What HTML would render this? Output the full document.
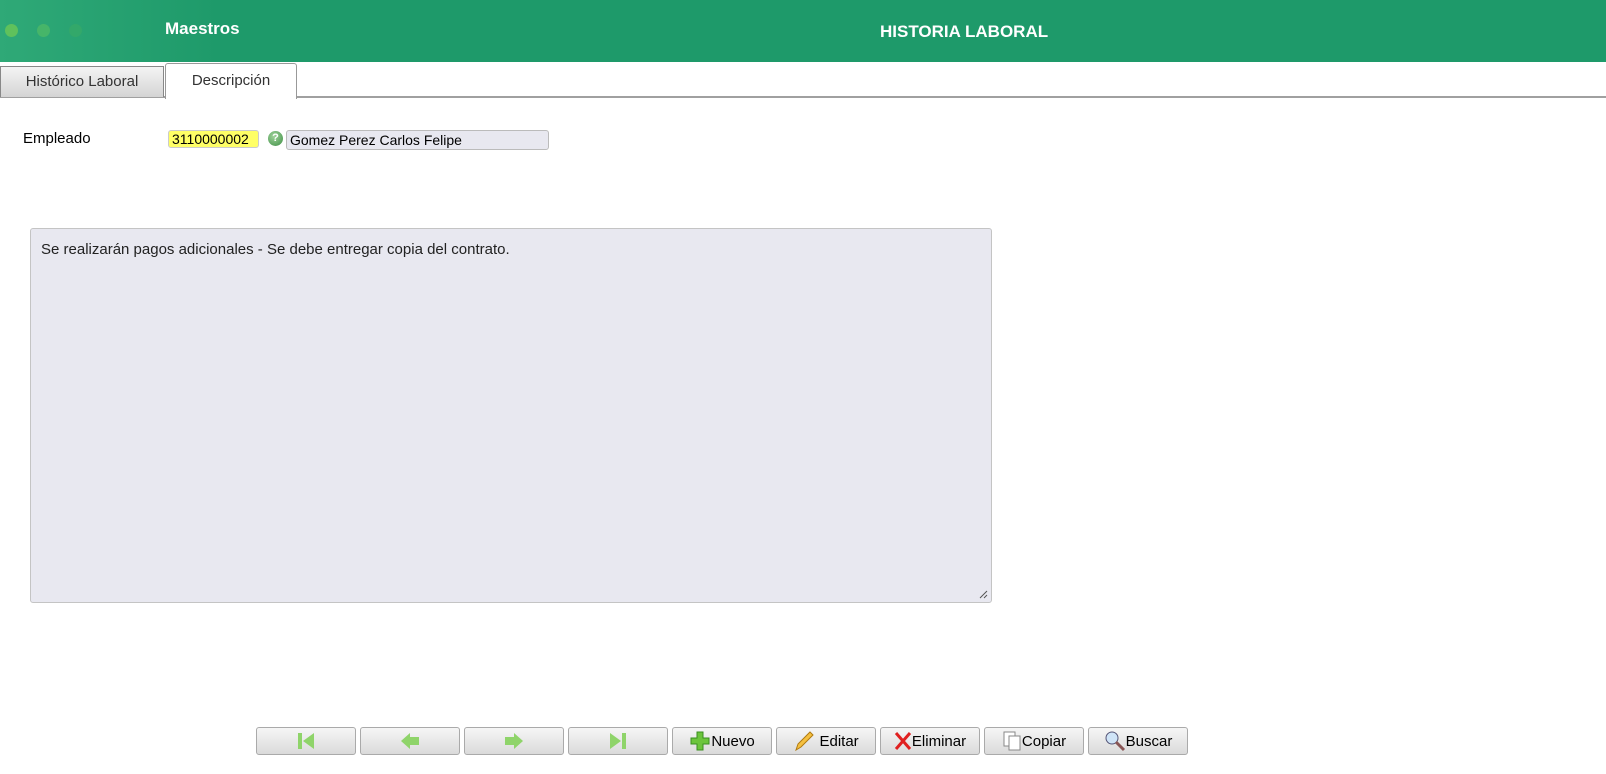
<!DOCTYPE html>
<html><head><meta charset="utf-8"><style>
body{margin:0;width:1606px;height:774px;overflow:hidden;background:#fff;font-family:"Liberation Sans",sans-serif;position:relative}
.hdr{position:absolute;left:0;top:0;width:1606px;height:62px;background:linear-gradient(90deg,#2fa977 0,#1e9a6a 220px,#1e9a6a 100%)}
.dot{position:absolute;top:24px;width:13px;height:13px;border-radius:50%}
.hdr .t1{position:absolute;left:165px;top:19px;color:#fff;font-weight:bold;font-size:17px}
.hdr .t2{position:absolute;left:880px;top:22px;color:#fff;font-weight:bold;font-size:17px}
.tabline{position:absolute;left:0;top:96px;width:1606px;height:2px;background:#a0a0a0}
.tab1{position:absolute;left:0;top:66px;width:162px;height:30px;background:linear-gradient(#f4f4f4,#d4d4d4);border:1px solid #888;border-bottom:none;font-size:15px;color:#333;text-align:center;line-height:29px}
.tab2{position:absolute;left:165px;top:63px;width:130px;height:35px;background:#fff;border:1px solid #999;border-bottom:none;border-radius:3px 3px 0 0;font-size:15px;color:#333;text-align:center;line-height:34px}
.lbl{position:absolute;left:23px;top:130px;font-size:15px;color:#000}
.code{position:absolute;left:168px;top:130px;height:18px;background:#ffff66;border:1px solid #ccc;border-radius:3px;font-size:14px;line-height:17px;padding-left:3px;box-sizing:border-box;width:91px}
.q{position:absolute;left:268px;top:131px;width:15px;height:15px;border-radius:50%;background:radial-gradient(circle at 40% 35%,#9fd39a,#3e8e45);color:#fff;font:bold 11px "Liberation Sans";text-align:center;line-height:15px}
.name{position:absolute;left:286px;top:130px;width:263px;height:20px;background:#e8e8f0;border:1px solid #bbb;border-radius:3px;box-sizing:border-box;font-size:14px;line-height:18px;padding-left:3px}
.ta{position:absolute;left:30px;top:228px;width:962px;height:375px;box-sizing:border-box;background:#e8e8f0;border:1px solid #c4c4c4;border-radius:3px;font-size:15px;padding:12px 10px;color:#222}
.btn{position:absolute;top:727px;width:100px;height:28px;box-sizing:border-box;border:1px solid #aaa;border-radius:3px;background:linear-gradient(#f6f6f6,#dadada);font-size:15px;color:#000;display:flex;align-items:center;justify-content:center;font-family:"Liberation Sans Narrow","Liberation Sans",sans-serif}
</style></head><body>
<div class="hdr">
<div class="dot" style="left:5px;background:#5fc15c"></div>
<div class="dot" style="left:37px;background:#4db966;opacity:.8"></div>
<div class="dot" style="left:69px;background:#33a86a"></div>
<div class="t1">Maestros</div><div class="t2">HISTORIA LABORAL</div></div>
<div class="tabline"></div>
<div class="tab1">Histórico Laboral</div>
<div class="tab2">Descripción</div>
<div class="lbl">Empleado</div>
<div class="code">3110000002</div>
<div class="q">?</div>
<div class="name">Gomez Perez Carlos Felipe</div>
<div class="ta">Se realizarán pagos adicionales - Se debe entregar copia del contrato.
<svg style="position:absolute;right:3px;bottom:3px" width="9" height="9"><path d="M1 8L8 1M5 8L8 5" stroke="#555"/></svg></div>
<div class="btn" style="left:256px"><svg width="20" height="20"><rect x="2" y="2" width="4" height="16" fill="#8fd46a"/><path d="M18 2L7 10L18 18Z" fill="#8fd46a"/></svg></div>
<div class="btn" style="left:360px"><svg width="22" height="20"><path d="M2 10L11 2V6H20V14H11V18Z" fill="#8fd46a"/></svg></div>
<div class="btn" style="left:464px"><svg width="22" height="20"><path d="M20 10L11 2V6H2V14H11V18Z" fill="#8fd46a"/></svg></div>
<div class="btn" style="left:568px"><svg width="20" height="20"><rect x="14" y="2" width="4" height="16" fill="#8fd46a"/><path d="M2 2L13 10L2 18Z" fill="#8fd46a"/></svg></div>
<div class="btn" style="left:672px"><svg width="22" height="22"><path d="M8 2H14V8H20V14H14V20H8V14H2V8H8Z" fill="#6cc53c" stroke="#3a8f20"/></svg>Nuevo</div>
<div class="btn" style="left:776px"><svg width="22" height="22"><path d="M3 20L5 14L17 2L20 5L8 17Z" fill="#f5c040" stroke="#b07a10"/></svg>&nbsp;Editar</div>
<div class="btn" style="left:880px"><svg width="18" height="20"><path d="M2 2L16 18M16 2L2 18" stroke="#e02020" stroke-width="3"/></svg>Eliminar</div>
<div class="btn" style="left:984px"><svg width="20" height="22"><rect x="2" y="2" width="11" height="14" fill="#fff" stroke="#888"/><rect x="7" y="6" width="11" height="14" fill="#fff" stroke="#888"/></svg>Copiar</div>
<div class="btn" style="left:1088px"><svg width="22" height="22"><circle cx="8" cy="8" r="6" fill="#cfe4f7" stroke="#557"/><path d="M12 12L20 20" stroke="#855" stroke-width="3"/></svg>Buscar</div>
</body></html>
